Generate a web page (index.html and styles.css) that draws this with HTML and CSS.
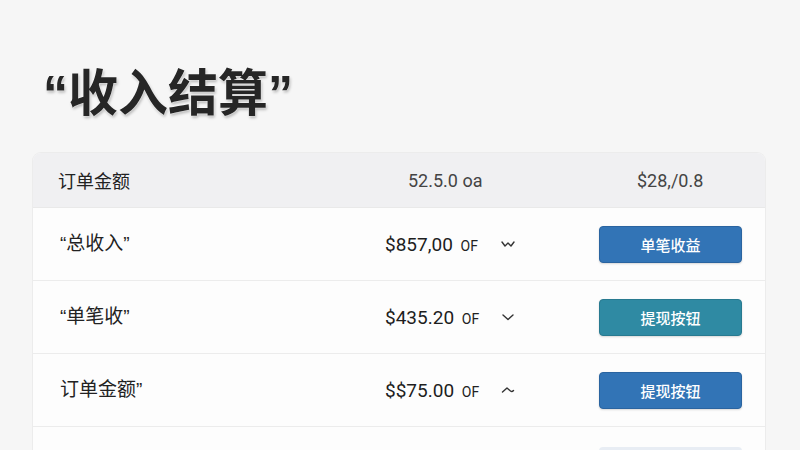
FILE: index.html
```html
<!DOCTYPE html>
<html lang="zh-CN">
<head>
<meta charset="utf-8">
<title>收入结算</title>
<link rel="stylesheet" href="styles.css">
</head>
<body>
<div class="page">
  <h1 class="title">“收入结算”</h1>
  <div class="card">
    <div class="head-row">
      <span class="label">订单金额</span>
      <span class="num">52.5.0 oa</span>
      <span class="num">$28,/0.8</span>
    </div>
    <div class="row">
      <span class="label">“总收入”</span>
      <span class="amount">$857,00 <small>OF</small></span>
      <span class="icon"><svg width="14" height="8" viewBox="0 0 14 8"><polyline points="1,2 4,6 7,3 10,6 13,2" fill="none" stroke="#333" stroke-width="1.4" stroke-linejoin="round" stroke-linecap="round"/></svg></span>
      <button class="btn">单笔收益</button>
    </div>
    <div class="row">
      <span class="label">“单笔收”</span>
      <span class="amount">$4<span class="ghost">3</span>5.20 <small>OF</small></span>
      <span class="icon"><svg width="14" height="8" viewBox="0 0 14 8"><polyline points="2,2 7,6.5 12,2" fill="none" stroke="#333" stroke-width="1.4" stroke-linejoin="round" stroke-linecap="round"/></svg></span>
      <button class="btn teal">提现按钮</button>
    </div>
    <div class="row">
      <span class="label">订单金额”</span>
      <span class="amount">$$75.00 <small>OF</small></span>
      <span class="icon"><svg width="14" height="8" viewBox="0 0 14 8"><path d="M1.5 6 L6 2 L9.5 5 Q11 6.2 12.5 4.5" fill="none" stroke="#333" stroke-width="1.4" stroke-linejoin="round" stroke-linecap="round"/></svg></span>
      <button class="btn">提现按钮</button>
    </div>
    <div class="row last">
      <span class="label"></span>
      <span class="amount"></span>
      <span class="icon"></span>
      <span class="btn ghost-btn"></span>
    </div>
  </div>
</div>
</body>
</html>
```
FILE: styles.css
```css
html, body {
  margin: 0;
  padding: 0;
  background: #f6f6f6;
  height: 100%;
  overflow: hidden;
}
body {
  font-family: "Roboto", "Noto Sans CJK SC", sans-serif;
  color: #222;
}
.page {
  padding: 69px 35px 0 33px;
}
.title {
  margin: 0 0 34px 10px;
  font-family: "Liberation Sans", "Noto Sans CJK SC", sans-serif;
  font-weight: 700;
  font-size: 50px;
  line-height: 50px;
  color: #262626;
  text-shadow: 0 0 2px #fff, 0 0 1px #fff, 1px 2px 3px rgba(0,0,0,0.28);
}
.card {
  background: #fdfdfd;
  border-radius: 8px 8px 0 0;
  overflow: hidden;
  box-shadow: 0 0 0 1px #ececec;
}
.head-row {
  display: grid;
  grid-template-columns: 350px 229px 1fr;
  align-items: center;
  height: 54px;
  padding: 0 23px 0 25px;
  background: #f0f0f2;
  border-bottom: 1px solid #e9e9e9;
}
.label {
  font-family: "Liberation Sans", "Noto Sans CJK SC", sans-serif;
  font-size: 18px;
  color: #222;
}
.num {
  font-size: 18px;
  color: #444;
}
.row {
  display: grid;
  grid-template-columns: 327px 116px 98px 143px;
  align-items: center;
  height: 72px;
  padding: 0 23px 0 25px;
  border-bottom: 1px solid #ececec;
}
.row .label {
  position: relative;
  top: -3px;
  padding-left: 2px;
  font-size: 19px;
}
.amount {
  font-size: 19px;
  color: #1e1e1e;
  white-space: nowrap;
}
.amount small {
  font-size: 14px;
  margin-left: 3px;
  color: #222;
}
.ghost {
  letter-spacing: -5px;
  margin-right: 5px;
}
.icon {
  display: flex;
  align-items: center;
}
.btn {
  height: 37px;
  border: 1px solid #2a64a0;
  border-radius: 4px;
  background: #3274b6;
  color: #fff;
  font-family: "Noto Sans CJK SC", sans-serif;
  font-size: 15px;
  font-weight: 500;
  box-shadow: 0 1px 2px rgba(0,0,0,0.15);
  padding: 0;
}
.btn.teal {
  background: #2f8aa3;
  border-color: #287a90;
}
.row.last {
  align-items: end;
  height: 24px;
  border-bottom: none;
}
.ghost-btn {
  display: block;
  height: 4px;
  border: none;
  border-radius: 4px 4px 0 0;
  background: #e8edf4;
  box-shadow: none;
}
```
